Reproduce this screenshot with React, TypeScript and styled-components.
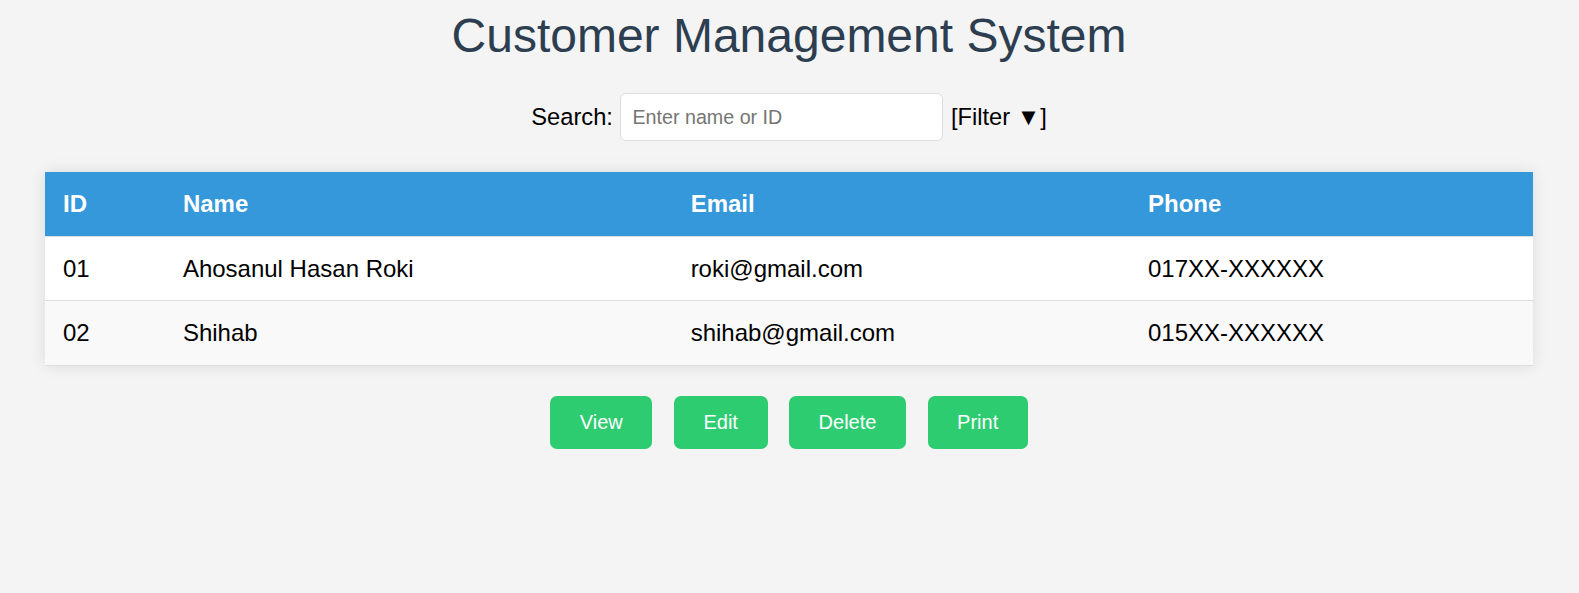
import React from "react";
import styled, { createGlobalStyle } from "styled-components";

const GlobalStyle = createGlobalStyle`
  html, body {
    margin: 0;
    padding: 0;
    background: #f4f4f4;
    font-family: "Liberation Sans", Arial, sans-serif;
    color: #000;
  }
`;

// #region Layout
const Page = styled.div`
  display: flex;
  flex-direction: column;
  align-items: center;
  padding: 8px 46px 40px 45px;
  font-size: 23.7px;
`;
const Title = styled.h1`
  margin: 0;
  font-size: 48px;
  line-height: 55px;
  font-weight: 400;
  color: #2c3e50;
`;
const SearchRow = styled.div`
  display: flex;
  align-items: center;
  margin-top: 30px;
  gap: 7.5px;
  line-height: 27px;
`;
const SearchInput = styled.input`
  width: 323px;
  height: 48px;
  box-sizing: border-box;
  padding: 0 11px;
  border: 1px solid #ddd;
  border-radius: 6px;
  background: #fff;
  font-family: "Liberation Sans", Arial, sans-serif;
  font-size: 19.7px;
  color: #000;
  outline: none;

  &::placeholder {
    color: #757575;
  }
`;
// #endregion

// #region Table
const Table = styled.table`
  width: 100%;
  margin-top: 31px;
  border-collapse: collapse;
  table-layout: fixed;
  background: #fff;
  font-size: 24px;
  box-shadow: 0 0 15px rgba(0, 0, 0, 0.1);
`;
const Col = styled.col<{ $width: number }>`
  width: ${(p) => p.$width}px;
`;
const HeadCell = styled.th`
  height: 64px;
  box-sizing: border-box;
  padding: 0 18px;
  text-align: left;
  background: #3498db;
  color: #fff;
  font-weight: 700;
  line-height: 27px;
  border-bottom: 1px solid #ddd;
`;
const Row = styled.tr<{ $striped?: boolean }>`
  background: ${(p) => (p.$striped ? "#f9f9f9" : "#fff")};
`;
const Cell = styled.td`
  height: 64.5px;
  box-sizing: border-box;
  padding: 0 18px;
  line-height: 27px;
  border-bottom: 1px solid #ddd;
`;
// #endregion

// #region Buttons
const ButtonRow = styled.div`
  display: flex;
  gap: 21.5px;
  margin-top: 30px;
`;
const ActionButton = styled.button`
  padding: 15px 29.6px;
  border: none;
  border-radius: 7px;
  background: #2ecc71;
  color: #fff;
  font-family: "Liberation Sans", Arial, sans-serif;
  font-size: 20px;
  line-height: 23px;
  cursor: pointer;
`;
// #endregion

const customers = [
  { id: "01", name: "Ahosanul Hasan Roki", email: "roki@gmail.com", phone: "017XX-XXXXXX" },
  { id: "02", name: "Shihab", email: "shihab@gmail.com", phone: "015XX-XXXXXX" },
];

const actions = ["View", "Edit", "Delete", "Print"];

export default function App() {
  return (
    <Page>
      <GlobalStyle />
      <Title>Customer Management System</Title>
      <SearchRow>
        <span>Search:</span>
        <SearchInput placeholder="Enter name or ID" />
        <span>[Filter ▼]</span>
      </SearchRow>
      <Table>
        <colgroup>
          <Col $width={119} />
          <Col $width={504} />
          <Col $width={454} />
          <Col $width={400} />
        </colgroup>
        <thead>
          <tr>
            <HeadCell>ID</HeadCell>
            <HeadCell>Name</HeadCell>
            <HeadCell>Email</HeadCell>
            <HeadCell>Phone</HeadCell>
          </tr>
        </thead>
        <tbody>
          {customers.map((c, i) => (
            <Row key={c.id} $striped={i % 2 === 1}>
              <Cell>{c.id}</Cell>
              <Cell>{c.name}</Cell>
              <Cell>{c.email}</Cell>
              <Cell>{c.phone}</Cell>
            </Row>
          ))}
        </tbody>
      </Table>
      <ButtonRow>
        {actions.map((a) => (
          <ActionButton key={a}>{a}</ActionButton>
        ))}
      </ButtonRow>
    </Page>
  );
}
